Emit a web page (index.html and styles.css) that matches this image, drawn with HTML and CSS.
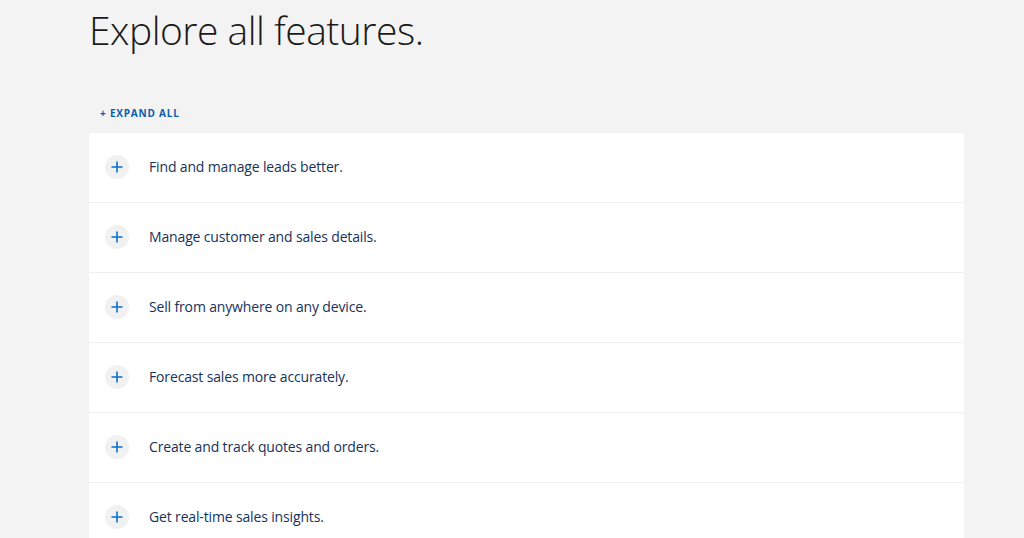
FILE: index.html
```html
<!DOCTYPE html>
<html>
<head>
<meta charset="utf-8">
<link rel="stylesheet" href="styles.css">
</head>
<body>
<main class="page">
  <h1 class="title">Explore all features.</h1>
  <div class="expand">+ EXPAND ALL</div>
  <ul class="list">
    <li class="row"><span class="icon"><svg width="12" height="12" viewBox="0 0 12 12"><path d="M6 0.5V11.5M0.5 6H11.5" stroke="#0b6fce" stroke-width="1.6" fill="none"/></svg></span><span class="label">Find and manage leads better.</span></li>
    <li class="row"><span class="icon"><svg width="12" height="12" viewBox="0 0 12 12"><path d="M6 0.5V11.5M0.5 6H11.5" stroke="#0b6fce" stroke-width="1.6" fill="none"/></svg></span><span class="label">Manage customer and sales details.</span></li>
    <li class="row"><span class="icon"><svg width="12" height="12" viewBox="0 0 12 12"><path d="M6 0.5V11.5M0.5 6H11.5" stroke="#0b6fce" stroke-width="1.6" fill="none"/></svg></span><span class="label">Sell from anywhere on any device.</span></li>
    <li class="row"><span class="icon"><svg width="12" height="12" viewBox="0 0 12 12"><path d="M6 0.5V11.5M0.5 6H11.5" stroke="#0b6fce" stroke-width="1.6" fill="none"/></svg></span><span class="label">Forecast sales more accurately.</span></li>
    <li class="row"><span class="icon"><svg width="12" height="12" viewBox="0 0 12 12"><path d="M6 0.5V11.5M0.5 6H11.5" stroke="#0b6fce" stroke-width="1.6" fill="none"/></svg></span><span class="label">Create and track quotes and orders.</span></li>
    <li class="row"><span class="icon"><svg width="12" height="12" viewBox="0 0 12 12"><path d="M6 0.5V11.5M0.5 6H11.5" stroke="#0b6fce" stroke-width="1.6" fill="none"/></svg></span><span class="label">Get real-time sales insights.</span></li>
  </ul>
</main>
</body>
</html>
```
FILE: styles.css
```css
html, body {
  margin: 0;
  padding: 0;
  background: #f3f3f3;
  overflow: hidden;
}
.page {
  margin-left: 89px;
  width: 875px;
  padding-top: 6px;
  font-family: "Open Sans", sans-serif;
}
.title {
  margin: 0;
  font-size: 39px;
  line-height: 48px;
  font-weight: 300;
  color: #1a1a1a;
  letter-spacing: -0.5px;
}
.expand {
  margin-top: 52px;
  padding-left: 11px;
  font-size: 10px;
  line-height: 14px;
  font-weight: 700;
  letter-spacing: 0.8px;
  color: #0b5cab;
}
.list {
  list-style: none;
  margin: 13px 0 0 0;
  padding: 0;
  background: #fff;
}
.row {
  box-sizing: border-box;
  height: 70px;
  border-bottom: 1px solid #efefef;
  display: flex;
  align-items: center;
  padding-left: 16px;
}
.icon {
  width: 24px;
  height: 24px;
  border-radius: 50%;
  background: #f1f1f1;
  display: flex;
  align-items: center;
  justify-content: center;
  flex: none;
  position: relative;
  top: -1px;
}
.label {
  margin-left: 20px;
  font-size: 14px;
  letter-spacing: -0.15px;
  color: #16325c;
  position: relative;
  top: -1px;
}
```
